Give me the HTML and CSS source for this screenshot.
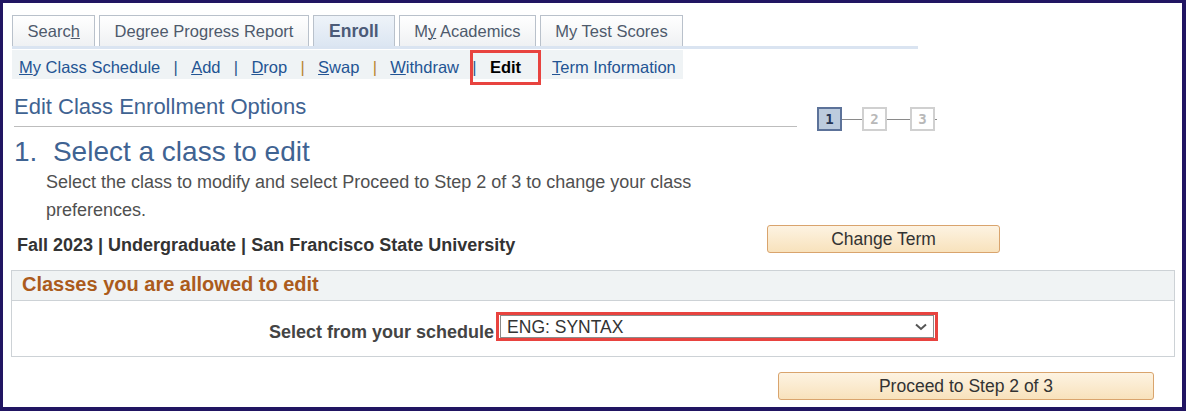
FILE: index.html
```html
<!DOCTYPE html>
<html lang="en">
<head>
<meta charset="utf-8">
<title>Edit Class Enrollment Options</title>
<link rel="stylesheet" href="styles.css">
</head>
<body>
<div class="frame">
  <nav class="tabs">
    <a class="tab">Searc<u>h</u></a>
    <a class="tab">Degree Progress Report</a>
    <a class="tab tab-active">Enroll</a>
    <a class="tab">M<u>y</u> Academics</a>
    <a class="tab">My Test Scores</a>
  </nav>
  <div class="tab-bar"></div>
  <div class="subnav">
    <a class="sublink"><u>M</u>y Class Schedule</a><span class="sep sep-blue">|</span>
    <a class="sublink"><u>A</u>dd</a><span class="sep sep-blue">|</span>
    <a class="sublink"><u>D</u>rop</a><span class="sep sep-gold">|</span>
    <a class="sublink"><u>S</u>wap</a><span class="sep sep-gold">|</span>
    <a class="sublink"><u>W</u>ithdraw</a><span class="sep sep-blue">|</span>
    <span class="sublink current">Edit</span><span class="sep sep-hidden">|</span>
    <a class="sublink"><u>T</u>erm Information</a>
  </div>

  <div class="title-row">
    <h2 class="page-title">Edit Class Enrollment Options</h2>
    <div class="steps">
      <span class="step step-on">1</span>
      <span class="step-line"></span>
      <span class="step">2</span>
      <span class="step-line step-line-wide"></span>
      <span class="step">3</span>
      <span class="step-stub"></span>
    </div>
  </div>

  <h1 class="step-heading">1.&nbsp;&nbsp;Select a class to edit</h1>
  <p class="desc">Select the class to modify and select Proceed to Step 2 of 3 to change your class<br>preferences.</p>

  <div class="term-row">
    <span class="term-text">Fall 2023 | Undergraduate | San Francisco State University</span>
    <button class="btn btn-change">Change Term</button>
  </div>

  <section class="group">
    <div class="group-head">Classes you are allowed to edit</div>
    <div class="group-body">
      <span class="select-label">Select from your schedule</span>
      <div class="select-mark">
        <div class="select">
          <span class="select-value">ENG: SYNTAX</span>
          <svg class="chev" width="12" height="8" viewBox="0 0 12 8"><polyline points="1,1.5 6,6 11,1.5" fill="none" stroke="#555" stroke-width="2"/></svg>
        </div>
      </div>
    </div>
  </section>

  <div class="proceed-row">
    <button class="btn btn-proceed">Proceed to Step 2 of 3</button>
  </div>
</div>
</body>
</html>
```

FILE: styles.css
```css
* { box-sizing: border-box; }
html, body { margin: 0; padding: 0; }
body {
  font-family: "Liberation Sans", Arial, sans-serif;
  background: #ffffff;
}
.frame {
  width: 1186px;
  height: 411px;
  border-style: solid;
  border-color: #211562;
  border-width: 3px 4px 4px 3px;
  background: #fff;
  overflow: hidden;
}

/* Tabs */
.tabs {
  display: flex;
  gap: 3.5px;
  margin-top: 12px;
  padding-left: 9px;
}
.tab {
  display: block;
  height: 31px;
  padding: 0 14.6px;
  font-size: 16.5px;
  line-height: 30px;
  color: #4e5a6c;
  border: 1px solid #b9c1cb;
  border-bottom: none;
  background: linear-gradient(#ffffff, #eff1f3);
  white-space: nowrap;
}
.tab u { text-decoration-thickness: 1px; }
.tab-active {
  font-weight: bold;
  font-size: 17.5px;
  padding: 0 15.5px;
  color: #4c5b78;
  background: linear-gradient(#eef3f9, #dce6f2);
}
.tab-bar {
  margin-left: 9px;
  width: 906px;
  height: 3px;
  background: #dae4f1;
}

/* Sub navigation */
.subnav {
  position: relative;
  display: flex;
  margin: 1px 0 0 9px;
  width: 671px;
  height: 29px;
  padding: 5px 0 0 7px;
  background: #eff3f5;
  font-size: 16.5px;
  line-height: 24px;
  white-space: nowrap;
}
.sublink { color: #235493; }
.sublink u { text-decoration-thickness: 1px; }
.sep { margin: 0 13.3px; }
.sep-blue { color: #2c5a8e; }
.sep-gold { color: #b9862f; }
.sep-hidden { visibility: hidden; }
.current {
  position: relative;
  font-weight: bold;
  color: #000;
}
.current::before {
  content: "";
  position: absolute;
  left: -20px;
  top: -5px;
  width: 65px;
  height: 29px;
  border: 3px solid #e8433f;
}

/* Title row */
.title-row {
  display: flex;
  align-items: flex-start;
  margin-top: 16px;
  padding-left: 11px;
}
.page-title {
  margin: 0;
  width: 783px;
  font-weight: normal;
  font-size: 22px;
  line-height: 24px;
  color: #3f6392;
  padding-bottom: 7px;
  border-bottom: 1px solid #bdbdbd;
}
.steps {
  display: flex;
  align-items: center;
  margin: 12px 0 -4px 20px;
}
.step {
  display: flex;
  align-items: center;
  justify-content: center;
  width: 25px;
  height: 24px;
  border: 2px solid #d0d0d0;
  background: #fff;
  font-family: "DejaVu Sans Mono", monospace;
  font-weight: bold;
  font-size: 14px;
  color: #b8b8b8;
}
.step-on {
  border-color: #5c7299;
  background: #bccbdd;
  color: #253555;
}
.step-line {
  width: 20px;
  height: 1px;
  background: #8a8a8a;
}
.step-line-wide { width: 23px; }
.step-stub {
  width: 2px;
  height: 1px;
  background: #8a8a8a;
}

/* Heading + description */
.step-heading {
  margin: 8px 0 0 0;
  padding-left: 11px;
  font-weight: normal;
  font-size: 28px;
  line-height: 33px;
  color: #3f6392;
}
.desc {
  margin: 0;
  padding-left: 43px;
  font-size: 18px;
  line-height: 28px;
  color: #505050;
}

/* Term row */
.term-row {
  display: flex;
  align-items: flex-start;
  margin-top: 1px;
  padding-left: 14px;
}
.term-text {
  width: 750px;
  padding-top: 10px;
  font-weight: bold;
  font-size: 18px;
  line-height: 20px;
  color: #333;
}
.btn {
  height: 28px;
  border: 1px solid #d9a46d;
  border-radius: 3px;
  background: linear-gradient(#fdf3e2, #f8e2bc);
  font-family: "Liberation Sans", Arial, sans-serif;
  font-size: 17.5px;
  line-height: 24px;
  color: #333;
  padding: 0;
}
.btn-change { width: 233px; }

/* Group box */
.group {
  margin: 15px 7px 0 8px;
  border: 1px solid #cdd2d6;
}
.group-head {
  height: 30px;
  padding: 0 0 3px 10px;
  background: #f0f3f4;
  border-bottom: 1px solid #cdd2d6;
  font-weight: bold;
  font-size: 20px;
  line-height: 26px;
  color: #ab5b1c;
}
.group-body {
  display: flex;
  align-items: flex-start;
  height: 55px;
  padding: 11px 0 0 257px;
}
.select-label {
  margin-top: 10px;
  margin-right: 2px;
  font-weight: bold;
  font-size: 18px;
  line-height: 20px;
  color: #444;
}
.select-mark {
  border: 3px solid #e8433f;
  padding: 0 1px;
}
.select {
  display: flex;
  align-items: center;
  justify-content: space-between;
  width: 434px;
  height: 23px;
  border: 1px solid #8b8b8b;
  background: #fff;
  padding: 0 6px 0 6px;
}
.select-value {
  font-size: 17.5px;
  line-height: 19px;
  padding-top: 2px;
  color: #333;
}
.chev { display: block; }

/* Proceed */
.proceed-row {
  display: flex;
  justify-content: flex-end;
  margin-top: 15px;
  padding-right: 28px;
}
.btn-proceed { width: 376px; }
```
